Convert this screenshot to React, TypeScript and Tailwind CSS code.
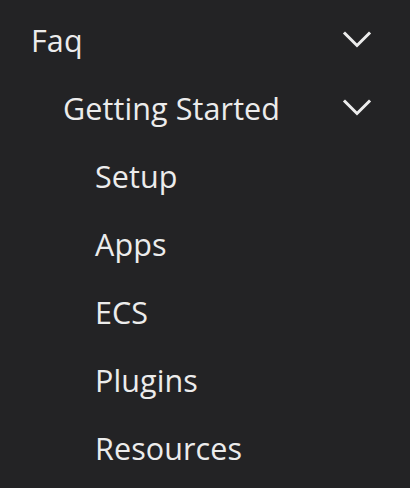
import React from "react";

const Chevron = () => (
  <svg width="30" height="20" viewBox="0 0 30 20" fill="none" className="shrink-0">
    <path d="M3 3.5 L15 15.5 L27 3.5" stroke="#ececec" strokeWidth="3" strokeLinecap="square" strokeLinejoin="miter" />
  </svg>
);

const Label = ({ children }: { children: React.ReactNode }) => (
  <span className="text-[30.5px] font-medium leading-none tracking-[0.1px] text-[#ececec]">{children}</span>
);

export default function App() {
  return (
    <div
      className="h-[488px] w-[410px] bg-[#232325] pt-[6px] pl-[31px] pr-[38px]"
      style={{ fontFamily: '"Open Sans", "Noto Sans", sans-serif' }}
    >
      <div className="flex h-[68px] items-center justify-between">
        <Label>Faq</Label>
        <Chevron />
      </div>
      <div className="pl-[32px]">
        <div className="flex h-[68px] items-center justify-between">
          <Label>Getting Started</Label>
          <Chevron />
        </div>
        <div className="pl-[32px]">
          {["Setup", "Apps", "ECS", "Plugins", "Resources"].map((l) => (
            <div key={l} className="flex h-[68px] items-center">
              <Label>{l}</Label>
            </div>
          ))}
        </div>
      </div>
    </div>
  );
}
